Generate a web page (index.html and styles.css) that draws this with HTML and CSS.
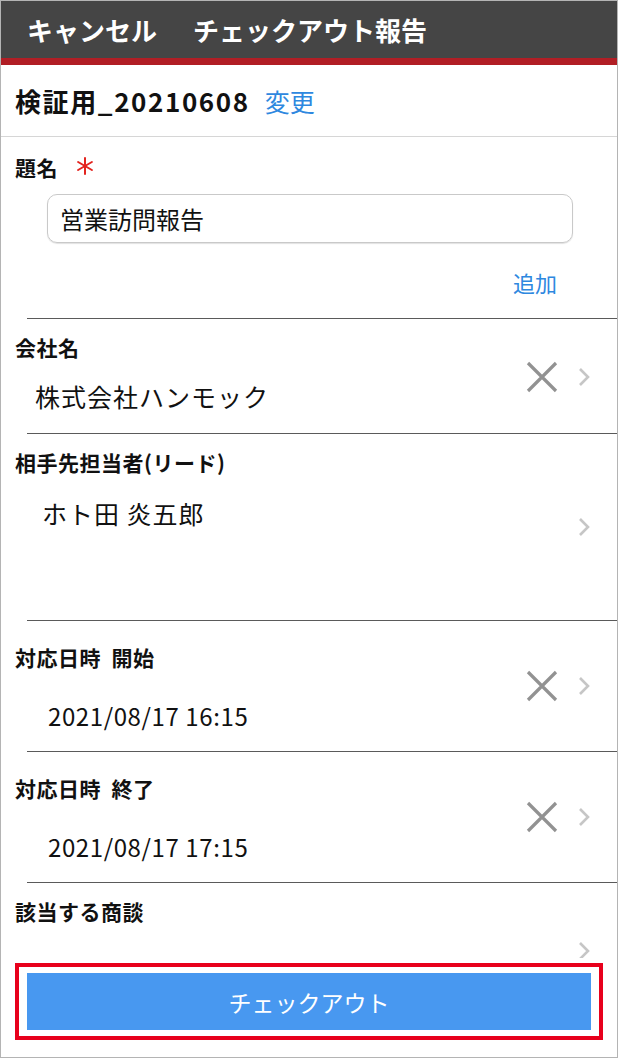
FILE: index.html
```html
<!DOCTYPE html>
<html lang="ja">
<head>
    <meta charset="UTF-8">
    <meta name="viewport" content="width=device-width, initial-scale=1.0">
    <title>チェックアウト報告</title>
    <link rel="stylesheet" href="styles.css">
</head>
<body>
    <div class="frame">
        <header class="topbar">
            <span class="topbar-cancel">キャンセル</span>
            <span class="topbar-title">チェックアウト報告</span>
        </header>
        <div class="record">
            <span class="record-name">検証用_20210608</span>
            <span class="link">変更</span>
        </div>

        <div class="content">
            <div class="field field-subject">
                <div class="label">題名
                    <svg class="required" width="18" height="18" viewBox="0 0 18 18">
                        <path d="M9 1v16M2.1 5l13.8 8M2.1 13l13.8-8" stroke="#e3241f" stroke-width="2" stroke-linecap="round"/>
                    </svg>
                </div>
                <div class="textbox">営業訪問報告</div>
                <div class="add"><span class="link">追加</span></div>
            </div>

            <div class="rule"></div>
            <div class="field field-company">
                <div class="label">会社名</div>
                <div class="body">
                    <div class="value">株式会社ハンモック</div>
                    <div class="actions">
                        <svg class="clear" width="32" height="32" viewBox="0 0 32 32">
                            <path d="M2 2l28 28M30 2L2 30" stroke="#929292" stroke-width="3.2"/>
                        </svg>
                        <svg class="chevron" width="14" height="20" viewBox="0 0 14 20">
                            <path d="M3 2l8 8-8 8" fill="none" stroke="#c6c6c6" stroke-width="2.6"/>
                        </svg>
                    </div>
                </div>
            </div>

            <div class="rule"></div>
            <div class="field field-contact">
                <div class="label">相手先担当者(リード)</div>
                <div class="body">
                    <div class="value">ホト田 炎五郎</div>
                    <div class="actions">
                        <svg class="chevron" width="14" height="20" viewBox="0 0 14 20">
                            <path d="M3 2l8 8-8 8" fill="none" stroke="#c6c6c6" stroke-width="2.6"/>
                        </svg>
                    </div>
                </div>
            </div>

            <div class="rule"></div>
            <div class="field field-date">
                <div class="label">対応日時&nbsp;&nbsp;開始</div>
                <div class="body">
                    <div class="value">2021/08/17 16:15</div>
                    <div class="actions">
                        <svg class="clear" width="32" height="32" viewBox="0 0 32 32">
                            <path d="M2 2l28 28M30 2L2 30" stroke="#929292" stroke-width="3.2"/>
                        </svg>
                        <svg class="chevron" width="14" height="20" viewBox="0 0 14 20">
                            <path d="M3 2l8 8-8 8" fill="none" stroke="#c6c6c6" stroke-width="2.6"/>
                        </svg>
                    </div>
                </div>
            </div>

            <div class="rule"></div>
            <div class="field field-date">
                <div class="label">対応日時&nbsp;&nbsp;終了</div>
                <div class="body">
                    <div class="value">2021/08/17 17:15</div>
                    <div class="actions">
                        <svg class="clear" width="32" height="32" viewBox="0 0 32 32">
                            <path d="M2 2l28 28M30 2L2 30" stroke="#929292" stroke-width="3.2"/>
                        </svg>
                        <svg class="chevron" width="14" height="20" viewBox="0 0 14 20">
                            <path d="M3 2l8 8-8 8" fill="none" stroke="#c6c6c6" stroke-width="2.6"/>
                        </svg>
                    </div>
                </div>
            </div>

            <div class="rule"></div>
            <div class="field field-deal">
                <div class="label">該当する商談</div>
                <div class="body">
                    <div class="value"></div>
                    <div class="actions">
                        <svg class="chevron" width="14" height="20" viewBox="0 0 14 20">
                            <path d="M3 2l8 8-8 8" fill="none" stroke="#c6c6c6" stroke-width="2.6"/>
                        </svg>
                    </div>
                </div>
            </div>
        </div>

        <footer class="footer">
            <div class="highlight">
                <button class="checkout" type="button">チェックアウト</button>
            </div>
        </footer>
    </div>
</body>
</html>
```

FILE: styles.css
```css
body {
    margin: 0;
    font-family: "Noto Sans CJK JP", "Noto Sans", sans-serif;
    color: #111;
    background: #fff;
}
.frame {
    display: flex;
    flex-direction: column;
    width: 618px;
    height: 1058px;
    box-sizing: border-box;
    border: 1px solid #b4b4b4;
    overflow: hidden;
}
.topbar {
    display: flex;
    align-items: center;
    gap: 36px;
    height: 57px;
    padding-left: 26px;
    background: #454545;
    border-bottom: 7px solid #b11e25;
    color: #fff;
    font-size: 26px;
    font-weight: bold;
    flex-shrink: 0;
}
.record {
    display: flex;
    align-items: center;
    gap: 15px;
    height: 71px;
    padding-left: 14px;
    border-bottom: 1px solid #d6d6d6;
    flex-shrink: 0;
}
.record-name {
    font-size: 26px;
    font-weight: bold;
    letter-spacing: 1.6px;
}
.record .link {
    font-size: 25px;
}
.link {
    color: #2e88df;
}
.content {
    flex: 1;
    overflow: hidden;
}
.rule {
    height: 1px;
    margin-left: 26px;
    background: #5a5a5a;
}
.field {
    padding-left: 14px;
    padding-right: 26px;
}
.label {
    display: flex;
    align-items: center;
    gap: 18px;
    height: 24px;
    font-size: 21px;
    font-weight: bold;
    letter-spacing: 0.5px;
}
.required {
    margin-top: -2px;
}
.field-subject {
    padding-top: 18px;
    padding-right: 60px;
    padding-bottom: 24px;
}
.textbox {
    margin: 15px 0 0 32px;
    width: 526px;
    height: 49px;
    box-sizing: border-box;
    padding-left: 12px;
    border: 1px solid #c9c9c9;
    border-radius: 10px;
    box-shadow: 0 1px 1px rgba(0, 0, 0, 0.12);
    display: flex;
    align-items: center;
    font-size: 24px;
}
.add {
    display: flex;
    justify-content: flex-end;
    margin-top: 27px;
    font-size: 22px;
    line-height: 24px;
}
.body {
    display: flex;
    align-items: flex-start;
}
.value {
    flex: 1;
    font-size: 25px;
    line-height: 30px;
    letter-spacing: 1px;
}
.actions {
    display: flex;
    align-items: center;
    gap: 19px;
    height: 32px;
}
.field-company {
    padding-top: 16px;
    padding-bottom: 22px;
}
.field-company .value {
    padding: 22px 0 0 20px;
}
.field-company .actions {
    margin-top: 2px;
}
.field-contact {
    padding-top: 16px;
    height: 186px;
    box-sizing: border-box;
}
.field-contact .value {
    padding: 24px 0 0 27px;
}
.field-contact .actions {
    margin-top: 37px;
}
.field-date {
    padding-top: 24px;
    padding-bottom: 20px;
}
.field-date .value {
    padding: 32px 0 0 33px;
    font-size: 24px;
    letter-spacing: 0.6px;
}
.field-date .actions {
    margin-top: 1px;
}
.field-deal {
    padding-top: 16px;
}
.field-deal .actions {
    margin-top: 12px;
}
.footer {
    flex-shrink: 0;
    padding: 5px 14px 17px;
    background: #fff;
}
.highlight {
    border: 4px solid #e8001c;
    padding: 6px 8px;
    width: 588px;
    box-sizing: border-box;
}
.checkout {
    display: block;
    width: 100%;
    height: 57px;
    border: none;
    background: #4898f0;
    color: #fff;
    font-family: inherit;
    font-size: 23px;
}
```
